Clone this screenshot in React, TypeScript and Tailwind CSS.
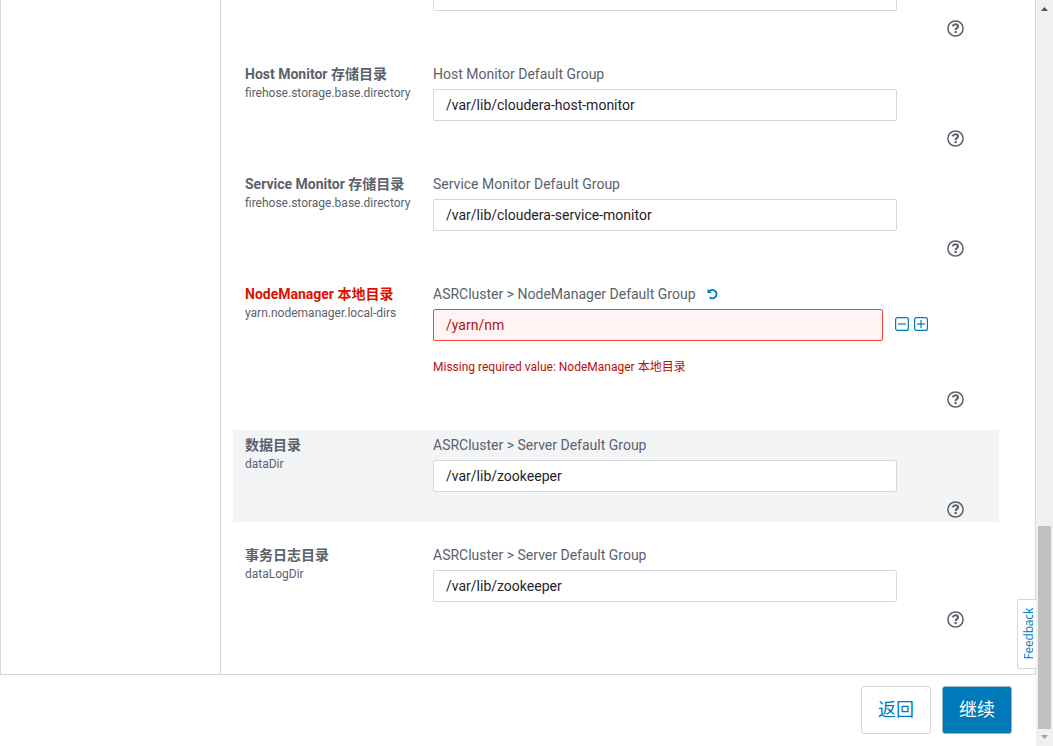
import type { ReactNode } from "react";

type Config = {
    label: string;
    property: string;
    group: string;
    value: string;
    error?: string;
    highlighted?: boolean;
};

const configs: Config[] = [
    {
        label: "Host Monitor 存储目录",
        property: "firehose.storage.base.directory",
        group: "Host Monitor Default Group",
        value: "/var/lib/cloudera-host-monitor",
    },
    {
        label: "Service Monitor 存储目录",
        property: "firehose.storage.base.directory",
        group: "Service Monitor Default Group",
        value: "/var/lib/cloudera-service-monitor",
    },
    {
        label: "NodeManager 本地目录",
        property: "yarn.nodemanager.local-dirs",
        group: "ASRCluster > NodeManager Default Group",
        value: "/yarn/nm",
        error: "Missing required value: NodeManager 本地目录",
    },
    {
        label: "数据目录",
        property: "dataDir",
        group: "ASRCluster > Server Default Group",
        value: "/var/lib/zookeeper",
        highlighted: true,
    },
    {
        label: "事务日志目录",
        property: "dataLogDir",
        group: "ASRCluster > Server Default Group",
        value: "/var/lib/zookeeper",
    },
];

function UndoIcon() {
    return (
        <svg viewBox="0 0 12 12" className="h-3 w-3" fill="none" aria-hidden="true">
            <path d="M2.6 3.1A4.1 4.1 0 1 1 2.7 9.2" stroke="currentColor" strokeWidth="1.9" />
            <path d="M0.5 0.8V5.1H4.9Z" fill="currentColor" />
        </svg>
    );
}

function SquareIcon({ children }: { children?: ReactNode }) {
    return (
        <svg viewBox="0 0 14 14" className="h-3.5 w-3.5" fill="none" stroke="currentColor" strokeWidth="1.2" aria-hidden="true">
            <rect x="0.6" y="0.6" width="12.8" height="12.8" rx="2" />
            <path d="M3 7H11" />
            {children}
        </svg>
    );
}

function HelpButton() {
    return (
        <button className="block" aria-label="Help">
            <svg viewBox="0 0 17 17" className="h-[17px] w-[17px]" fill="none" stroke="currentColor" aria-hidden="true">
                <circle cx="8.5" cy="8.5" r="7.6" strokeWidth="1.5" />
                <path d="M5.7 6.3C6.2 4.9 7.2 4.3 8.4 4.3C9.9 4.3 11 5.1 11 6.4C11 8.1 8.6 8.1 8.6 9.9" strokeWidth="2.1" />
                <path d="M8.6 10.9V13.1" strokeWidth="2.2" />
            </svg>
        </button>
    );
}

function ConfigRow({ config }: { config: Config }) {
    const { label, property, group, value, error, highlighted } = config;

    return (
        <div className={`flex shrink-0 px-3 ${error ? "h-[133px]" : "h-[92px]"} ${highlighted ? "bg-[#f3f4f6]" : ""}`}>
            <div className="w-[188px] shrink-0 pt-1.5">
                <div className={`text-sm leading-[18px] font-bold whitespace-nowrap ${error ? "text-[#dc1100]" : ""}`}>{label}</div>
                <div className="pt-px text-xs leading-[18px]">{property}</div>
            </div>
            <div className="flex w-[531px] shrink-0 flex-col">
                <div className="flex h-[30px] items-center gap-[11px] text-sm">
                    {group}
                    {error && (
                        <button className="text-[#0079b8]" aria-label="Reset">
                            <UndoIcon />
                        </button>
                    )}
                </div>
                <div className="flex items-center">
                    <input
                        readOnly
                        value={value}
                        className={`h-8 rounded-xs border px-3 text-sm outline-none ${
                            error
                                ? "w-[450px] border-[#f4473c] bg-[#fff4f3] text-[#b8110a]"
                                : "w-[464px] border-[#d6d8dc] bg-white text-[#1f2328]"
                        }`}
                    />
                    {error && (
                        <div className="flex gap-[5px] pb-0.5 pl-3 text-[#0079b8]">
                            <SquareIcon />
                            <SquareIcon>
                                <path d="M7 3V11" />
                            </SquareIcon>
                        </div>
                    )}
                </div>
                {error && <div className="pt-[17px] text-xs leading-[18px] text-[#b8110a]">{error}</div>}
                <div className="mt-auto self-end pb-1">
                    <HelpButton />
                </div>
            </div>
        </div>
    );
}

function Scrollbar() {
    return (
        <div className="flex w-[17px] shrink-0 flex-col items-center bg-[#f0f0f0]">
            <svg viewBox="0 0 17 17" className="h-[17px] w-[17px]" aria-hidden="true">
                <path d="M5 11L8.5 7L12 11Z" fill="#505050" />
            </svg>
            <div className="mt-[509px] h-[203px] w-[13px] bg-[#c1c1c1]" />
            <svg viewBox="0 0 17 17" className="h-[17px] w-[17px]" aria-hidden="true">
                <path d="M5 6L8.5 10L12 6Z" fill="#a3a3a3" />
            </svg>
        </div>
    );
}

export default function App() {
    return (
        <div className="relative flex h-[746px] w-[1053px] overflow-hidden bg-white font-['Roboto','Noto_Sans_CJK_SC',sans-serif] text-[#5b626b]">
            <div className="flex w-[1036px] flex-col">
                <main className="flex h-[675px] border border-t-0 border-[#d6d8dc]">
                    <aside className="w-[220px] shrink-0 border-r border-[#d6d8dc]" />
                    <section className="flex w-[778px] flex-col gap-[18px] pl-3">
                        {/* tail of the row scrolled off the top */}
                        <div className="flex h-[41px] shrink-0 pl-[200px]">
                            <div className="h-[11px] w-[464px] rounded-b-xs border border-t-0 border-[#d6d8dc]" />
                            <div className="mt-auto flex w-[67px] justify-end pb-1">
                                <HelpButton />
                            </div>
                        </div>
                        {configs.map((config) => (
                            <ConfigRow key={config.label} config={config} />
                        ))}
                    </section>
                </main>
                <footer className="flex justify-end gap-[11px] pt-[11px] pr-6 text-lg">
                    <button className="h-12 w-[70px] rounded-[3px] border border-[#d6d8dc] text-[#0079b8]">返回</button>
                    <button className="h-12 w-[70px] rounded-[3px] border border-[#a0b4c2] bg-[#0079b8] text-white">继续</button>
                </footer>
            </div>
            <Scrollbar />
            <button className="absolute top-[599px] left-[1017px] flex h-[70px] w-[19px] items-center justify-center rounded-l-xs border border-r-0 border-[#d6d8dc] bg-white pl-1 font-['Open_Sans',sans-serif] text-xs tracking-[-0.2px] text-[#0079b8]">
                <span className="rotate-180 [writing-mode:vertical-rl]">Feedback</span>
            </button>
        </div>
    );
}
